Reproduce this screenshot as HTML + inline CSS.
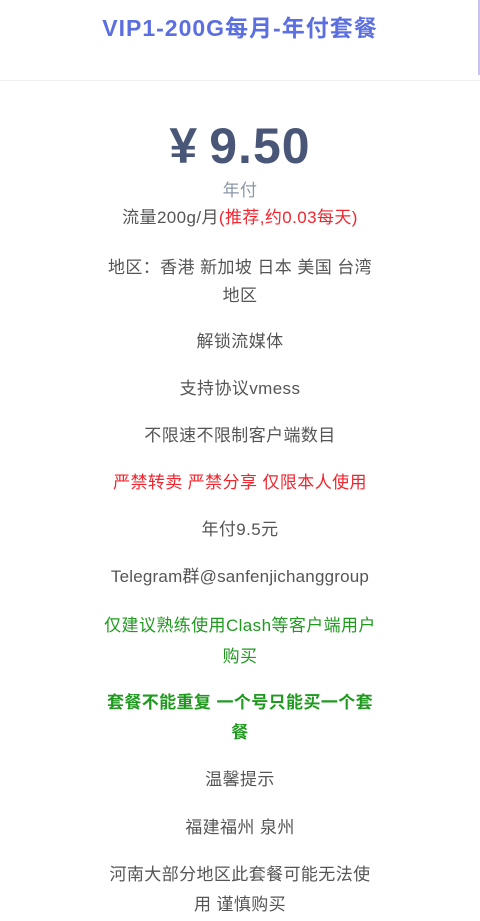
<!DOCTYPE html>
<html><head><meta charset="utf-8"><style>
body{margin:0;width:480px;height:921px;background:#fff;overflow:hidden;position:relative;font-family:"Liberation Sans","Noto Sans CJK SC",sans-serif}
.a{position:absolute;left:0;width:480px;text-align:center;white-space:nowrap;font-size:17px;letter-spacing:0.4px;color:#555;line-height:20px}
.r{color:#f0262f}.g{color:#1f9a1f}
</style></head><body>
<div class="a" style="top:14px;font-size:23px;font-weight:bold;color:#5b6fe0;line-height:28px;letter-spacing:1px">VIP1-200G每月-年付套餐</div>
<div style="position:absolute;right:0;top:0;width:2px;height:75px;background:#c9c3ef"></div>
<div style="position:absolute;left:0;top:80px;width:480px;height:1px;background:#f0f0f0"></div>
<div class="a" style="top:116px;font-size:50px;font-weight:bold;color:#4a5677;line-height:60px;letter-spacing:1px">¥&thinsp;9.50</div>
<div class="a" style="top:181px;color:#8a97a8">年付</div>
<div class="a" style="top:208px">流量200g/月<span class="r">(推荐,约0.03每天)</span></div>
<div class="a" style="top:258px">地区：香港 新加坡 日本 美国 台湾</div>
<div class="a" style="top:286px">地区</div>
<div class="a" style="top:332px">解锁流媒体</div>
<div class="a" style="top:379px">支持协议vmess</div>
<div class="a" style="top:426px">不限速不限制客户端数目</div>
<div class="a r" style="top:473px">严禁转卖 严禁分享 仅限本人使用</div>
<div class="a" style="top:520px">年付9.5元</div>
<div class="a" style="top:567px;font-size:17px;letter-spacing:0.2px">Telegram群@sanfenjichanggroup</div>
<div class="a g" style="top:616px">仅建议熟练使用Clash等客户端用户</div>
<div class="a g" style="top:647px">购买</div>
<div class="a g" style="top:693px;font-weight:bold">套餐不能重复 一个号只能买一个套</div>
<div class="a g" style="top:723px;font-weight:bold">餐</div>
<div class="a" style="top:770px">温馨提示</div>
<div class="a" style="top:818px">福建福州 泉州</div>
<div class="a" style="top:865px">河南大部分地区此套餐可能无法使</div>
<div class="a" style="top:895px">用 谨慎购买</div>
</body></html>
